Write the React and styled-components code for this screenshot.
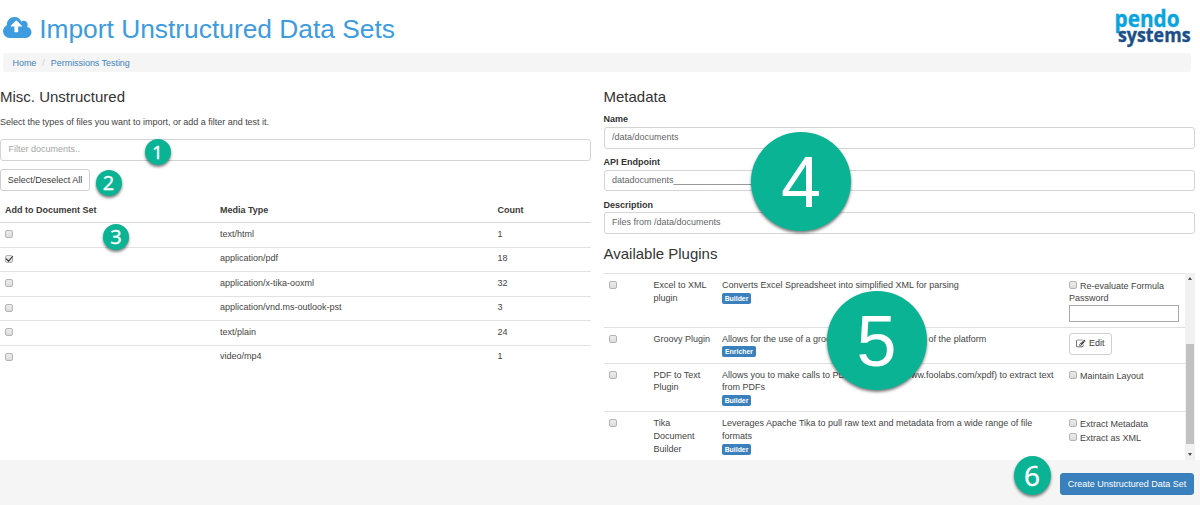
import React from "react";
import styled, { createGlobalStyle, css } from "styled-components";

const Global = createGlobalStyle`
  * { box-sizing: border-box; }
  html, body { margin: 0; background: #fff; overflow: hidden; }
  body {
    font-family: "Liberation Sans", Arial, sans-serif;
    font-size: 9px;
    line-height: 12.8px;
    color: #444;
  }
`;

const Page = styled.div`
  position: relative;
  width: 1200px;
  height: 505px;
  display: flex;
  flex-direction: column;
  overflow: hidden;
`;

const Header = styled.header`
  height: 53px;
  padding: 0 5px 0 3px;
  display: flex;
  justify-content: space-between;
`;

const Title = styled.h1`
  margin: 0;
  padding-top: 13px;
  display: flex;
  gap: 7.7px;
  font-size: 26.35px;
  line-height: 32px;
  font-weight: 400;
  color: #3d9be0;
  white-space: nowrap;
  svg { margin-top: 4.3px; }
`;

const Logo = styled.svg`
  display: block;
`;

const Breadcrumb = styled.nav`
  height: 19px;
  flex: none;
  margin: 0 9px 0 3px;
  padding: 1px 9.5px 0;
  display: flex;
  align-items: center;
  gap: 6px;
  background: #f5f5f5;
  border-radius: 2px;
  color: #ccc;
`;

const Crumb = styled.a`
  color: #4384bb;
  letter-spacing: -0.05px;
`;

const Columns = styled.main`
  flex: 1;
  display: flex;
  gap: 12.5px;
  min-height: 0;
`;

const Column = styled.section`
  width: 591px;
  flex: none;
  display: flex;
  flex-direction: column;
`;

const Heading = styled.h3`
  margin: 0;
  padding-top: ${(p) => p.$top}px;
  font-size: 15px;
  line-height: 18px;
  font-weight: 400;
  color: #333;
`;

const Intro = styled.p`
  margin: 10px 0 10px;
  line-height: 13px;
  letter-spacing: -0.015px;
`;

const field = css`
  width: 100%;
  height: 21.5px;
  padding: 0 7.5px 1px;
  border: 1px solid #d4d4d4;
  border-radius: 3px;
  background: #fff;
  font: inherit;
  outline: none;
`;

const Field = styled.input`
  ${field}
  display: block;
  color: #666;
  &::placeholder { color: #a5a5a5; opacity: 1; }
`;

const Button = styled.button`
  height: 22px;
  padding: 0;
  width: ${(p) => p.$w}px;
  margin-top: ${(p) => p.$top || 0}px;
  display: inline-flex;
  align-items: center;
  justify-content: center;
  gap: 3px;
  flex: none;
  font: inherit;
  white-space: nowrap;
  border: 1px solid ${(p) => (p.$primary ? "#357ebd" : "#d0d0d0")};
  border-radius: 3px;
  background: ${(p) => (p.$primary ? "#3a80bc" : "#fff")};
  color: ${(p) => (p.$primary ? "#fff" : "#3c3c3c")};
`;

const TypeTable = styled.div`
  margin-top: 7.5px;
`;

const TypeRow = styled.div`
  display: grid;
  grid-template-columns: 215px 277.5px 1fr;
  align-items: center;
  height: 24.5px;
  padding: 0 0 1px 5px;
  border-top: 1px solid #e2e2e2;
`;

const TypeHead = styled(TypeRow)`
  height: 23.5px;
  padding-bottom: 0;
  border-top: 0;
  font-weight: 700;
  color: #3a3a3a;
  & + div { border-top-color: #d6d6d6; }
`;

const Check = styled.input.attrs({ type: "checkbox", readOnly: true })`
  appearance: none;
  display: inline-grid;
  place-items: center;
  width: 8px;
  height: 8px;
  margin: 0;
  flex: none;
  border: 1px solid #b4b4b4;
  border-radius: 2px;
  background: linear-gradient(#ececec, #dcdcdc);
  &:checked::after {
    content: "";
    width: 5.5px;
    height: 3px;
    margin-top: -2px;
    border: solid #222;
    border-width: 0 0 1.5px 1.5px;
    transform: rotate(-48deg);
  }
`;

const Label = styled.label`
  display: block;
  height: 13px;
  margin: ${(p) => p.$top}px 0 ${(p) => p.$bottom}px;
  font-weight: 700;
  color: #333;
`;

const Scroller = styled.div`
  margin-top: 10px;
  height: 187px;
  display: flex;
  overflow: hidden;
`;

const Plugins = styled.div`
  width: 581px;
`;

const Plugin = styled.div`
  height: ${(p) => p.$h}px;
  padding: 5px 0 0 5px;
  display: grid;
  grid-template-columns: 45px 68.5px 347px 1fr;
  border-top: 1px solid #e0e0e0;
`;

const CheckCell = styled.div`
  padding-top: 2px;
  line-height: 0;
`;

const Description = styled.div`
  white-space: nowrap;
`;

const Tag = styled.span`
  display: block;
  width: ${(p) => p.$w}px;
  height: 11px;
  margin-top: 1px;
  border-radius: 2px;
  background: #3a80bc;
  color: #fff;
  font-size: 6.9px;
  line-height: 11px;
  font-weight: 700;
  text-align: center;
`;

const Option = styled.label`
  display: flex;
  gap: 3px;
  height: ${(p) => p.$h || 13}px;
  line-height: 14.5px;
  white-space: nowrap;
  input { margin-top: 2px; }
`;

const Password = styled.input`
  display: block;
  width: 110px;
  height: 17px;
  border: 1px solid #a9a9a9;
  background: #fff;
`;

const Scrollbar = styled.div`
  width: 10px;
  display: flex;
  flex-direction: column;
  justify-content: space-between;
  align-items: center;
  background: #f1f1f1;
  padding: 4px 0;
`;

const Thumb = styled.div`
  width: 8px;
  height: 100px;
  margin-top: 54px;
  background: #c1c1c1;
`;

const Arrow = styled.i`
  border: 2px solid transparent;
  ${(p) => (p.$down ? "border-top: 3px solid #505050; border-bottom: 0;" : "border-bottom: 3px solid #505050; border-top: 0;")}
`;

const Footer = styled.footer`
  height: 45px;
  flex: none;
  padding: 13px 6px 0 0;
  display: flex;
  justify-content: flex-end;
  background: #f5f5f5;
`;

const Marker = styled.span`
  position: absolute;
  left: ${(p) => p.$x}px;
  top: ${(p) => p.$y}px;
  width: ${(p) => p.$w}px;
  height: ${(p) => p.$h || p.$w}px;
  display: flex;
  align-items: center;
  justify-content: center;
  border-radius: 50%;
  background: #09b394;
  color: #fff;
  font-family: ${(p) => (p.$big ? '"Liberation Sans", Arial, sans-serif' : '"Open Sans", sans-serif')};
  font-size: ${(p) => p.$size}px;
  line-height: 1;
  -webkit-text-stroke: ${(p) => (p.$big ? 0 : 0.4)}px #fff;
  box-shadow: 0 2px 3px rgba(0, 0, 0, 0.5);
`;

const types = [
  ["text/html", 1],
  ["application/pdf", 18, true],
  ["application/x-tika-ooxml", 32],
  ["application/vnd.ms-outlook-pst", 3],
  ["text/plain", 24],
  ["video/mp4", 1],
];

const CloudUpload = () => (
  <svg width="28.5" height="21" viewBox="0 128 1920 1408" fill="currentColor">
    <path d="M1280 736q0-14-9-23l-352-352q-9-9-23-9t-23 9l-351 351q-10 12-10 24 0 14 9 23t23 9h224v352q0 13 9.5 22.5t22.5 9.5h192q13 0 22.5-9.5t9.5-22.5v-352h224q13 0 22.5-9.5t9.5-22.5zM1920 1152q0 159-112.500 271.500t-271.500 112.500h-1088q-185 0-316.500-131.500t-131.500-316.500q0-130 70-240t188-165q-2-30-2-43 0-212 150-362t362-150q156 0 285.500 87t188.500 231q71-62 166-62 106 0 181 75t75 181q0 76-41 138 130 31 213.500 135.500t83.500 238.500z" />
  </svg>
);

const EditIcon = () => (
  <svg width="9.5" height="9.5" viewBox="0 0 1792 1792" fill="#333">
    <path d="M888 1184l116-116-152-152-116 116v56h96v96h56zM1328 464q-16-16-33 1l-350 350q-17 17-1 33t33-1l350-350q17-17 1-33zM1408 1058v190q0 119-84.500 203.500t-203.500 84.500h-832q-119 0-203.500-84.500t-84.500-203.500v-832q0-119 84.500-203.500t203.500-84.500h832q63 0 117 25 15 7 18 23 3 17-9 29l-49 49q-14 14-32 8-23-6-45-6h-832q-66 0-113 47t-47 113v832q0 66 47 113t113 47h832q66 0 113-47t47-113v-126q0-13 9-22l64-64q15-15 35-7t20 29zM1312 320l288 288-672 672h-288v-288zM1756 452l-92 92-288-288 92-92q28-28 68-28t68 28l152 152q28 28 28 68t-28 68z" />
  </svg>
);

export default function App() {
  return (
    <Page>
      <Global />
      <Header>
        <Title>
          <CloudUpload />
          <span>Import Unstructured Data Sets</span>
        </Title>
        <Logo width="84" height="53" viewBox="0 0 84 53" fontFamily="Open Sans, sans-serif" fontWeight="700">
          <text x="3.500" y="27.200" fontSize="22.500" fill="#08a4e0" stroke="#08a4e0" strokeWidth="0.400" textLength="65" lengthAdjust="spacingAndGlyphs">pendo</text>
          <text x="7" y="41.800" fontSize="19.500" fill="#1c4f87" stroke="#1c4f87" strokeWidth="0.400" textLength="72.500" lengthAdjust="spacingAndGlyphs">systems</text>
        </Logo>
      </Header>
      <Breadcrumb>
        <Crumb>Home</Crumb>/<Crumb>Permissions Testing</Crumb>
      </Breadcrumb>
      <Columns>
        <Column>
          <Heading $top={16}>Misc. Unstructured</Heading>
          <Intro>Select the types of files you want to import, or add a filter and test it.</Intro>
          <Field placeholder="Filter documents.." />
          <Button $w={90} $top={8.5}>Select/Deselect All</Button>
          <TypeTable>
            <TypeHead>
              <span>Add to Document Set</span>
              <span>Media Type</span>
              <span>Count</span>
            </TypeHead>
            {types.map(([name, count, on]) => (
              <TypeRow key={name}>
                <Check checked={!!on} />
                <span>{name}</span>
                <span>{count}</span>
              </TypeRow>
            ))}
          </TypeTable>
        </Column>
        <Column>
          <Heading $top={16}>Metadata</Heading>
          <Label $top={7} $bottom={1}>Name</Label>
          <Field defaultValue="/data/documents" />
          <Label $top={7.5} $bottom={0.5}>API Endpoint</Label>
          <Field defaultValue="datadocuments____________________" />
          <Label $top={7.5} $bottom={0.5}>Description</Label>
          <Field defaultValue="Files from /data/documents" />
          <Heading $top={11.5}>Available Plugins</Heading>
          <Scroller>
            <Plugins>
              <Plugin $h={53.5}>
                <CheckCell><Check /></CheckCell>
                <div>Excel to XML<br />plugin</div>
                <Description>Converts Excel Spreadsheet into simplified XML for parsing<Tag $w={29}>Builder</Tag></Description>
                <div>
                  <Option>
                    <Check />Re-evaluate Formula
                  </Option>
                  <div>Password</div>
                  <Password />
                </div>
              </Plugin>
              <Plugin $h={36}>
                <CheckCell><Check /></CheckCell>
                <div>Groovy Plugin</div>
                <Description>Allows for the use of a groovy script to edit the data of the platform<Tag $w={34}>Enricher</Tag></Description>
                <div><Button $w={43}><EditIcon />Edit</Button></div>
              </Plugin>
              <Plugin $h={48.5}>
                <CheckCell><Check /></CheckCell>
                <div>PDF to Text<br />Plugin</div>
                <Description>Allows you to make calls to PDFToText (http://www.foolabs.com/xpdf) to extract text<br />from PDFs<Tag $w={29}>Builder</Tag></Description>
                <Option><Check />Maintain Layout</Option>
              </Plugin>
              <Plugin $h={52}>
                <CheckCell><Check /></CheckCell>
                <div>Tika<br />Document<br />Builder</div>
                <Description>Leverages Apache Tika to pull raw text and metadata from a wide range of file<br />formats<Tag $w={29}>Builder</Tag></Description>
                <div>
                  <Option $h={14}><Check />Extract Metadata</Option>
                  <Option><Check />Extract as XML</Option>
                </div>
              </Plugin>
            </Plugins>
            <Scrollbar>
              <Arrow />
              <Thumb />
              <Arrow $down />
            </Scrollbar>
          </Scroller>
        </Column>
      </Columns>
      <Footer>
        <Button $primary $w={134}>Create Unstructured Data Set</Button>
      </Footer>
      <Marker $x={144.5} $y={139} $w={26} $size={19}>1</Marker>
      <Marker $x={95.5} $y={169.5} $w={26} $size={20}>2</Marker>
      <Marker $x={103} $y={223.5} $w={26} $size={20}>3</Marker>
      <Marker $x={751} $y={132} $w={100} $h={99} $size={72} $big>4</Marker>
      <Marker $x={826.5} $y={291} $w={100} $h={99} $size={72} $big>5</Marker>
      <Marker $x={1013.5} $y={455.5} $w={37} $h={39} $size={28}>6</Marker>
    </Page>
  );
}
